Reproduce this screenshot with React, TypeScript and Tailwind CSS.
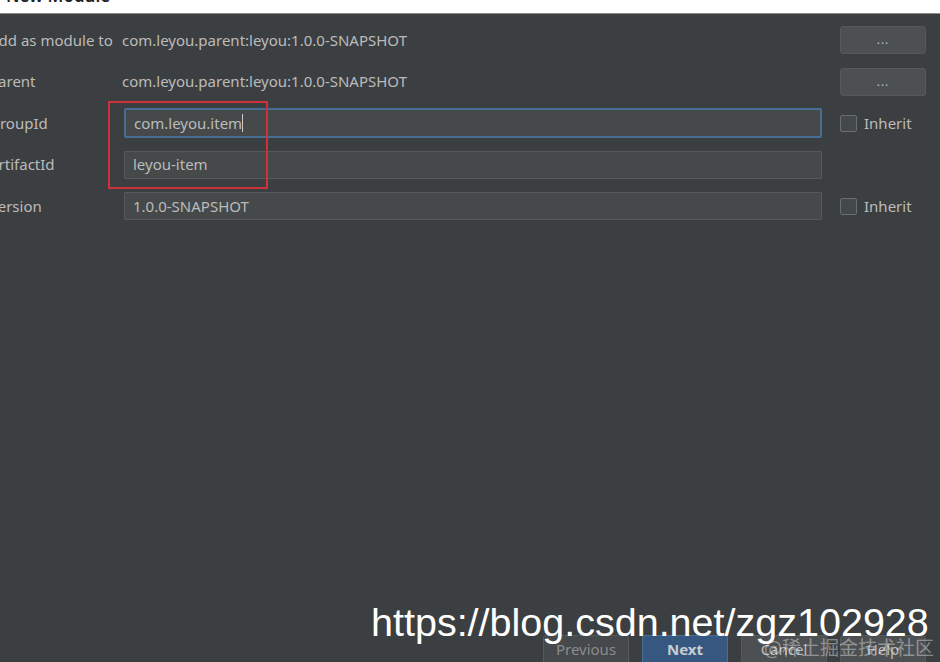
import React from "react";

const font = { fontFamily: '"Noto Sans", "Open Sans", sans-serif' };

function Checkbox({ label }: { label: string }) {
  return (
    <label className="flex items-center gap-[7px] text-[15px] text-[#bbbbbb]">
      <span className="w-[17px] h-[17px] rounded-[2px] border border-[#6b6e70] bg-[#43484a]" />
      {label}
    </label>
  );
}

function DotsButton() {
  return (
    <button className="w-[86px] h-[28px] rounded-[3px] border border-[#55595b] bg-[#4c5052] text-[#bbbbbb] text-[12px] leading-none tracking-[1px]">
      ...
    </button>
  );
}

function Input({ value, focused }: { value: string; focused?: boolean }) {
  return (
    <div
      className={
        focused
          ? "flex-1 h-[30px] flex items-center px-[8px] bg-[#45494a] border-2 border-[#466d94] rounded-[2px] text-[15px] text-[#bbbbbb]"
          : "flex-1 h-[28px] flex items-center px-[8px] bg-[#45494a] border border-[#55595b] rounded-[1px] text-[15px] text-[#bbbbbb]"
      }
    >
      {value}
      {focused && <span className="w-px h-[18px] bg-[#cccccc]" />}
    </div>
  );
}

export default function App() {
  const rows = [
    { label: "Add as module to", kind: "text", value: "com.leyou.parent:leyou:1.0.0-SNAPSHOT" },
    { label: "Parent", kind: "text", value: "com.leyou.parent:leyou:1.0.0-SNAPSHOT" },
    { label: "GroupId", kind: "focus", value: "com.leyou.item" },
    { label: "ArtifactId", kind: "input", value: "leyou-item" },
    { label: "Version", kind: "inherit", value: "1.0.0-SNAPSHOT" },
  ];

  return (
    <div className="relative w-[940px] h-[662px] overflow-hidden bg-[#3c3f41] flex flex-col" style={font}>
      {/* title bar, mostly cropped */}
      <div className="h-[14px] bg-white border-b border-[#8c8c8c] overflow-hidden flex justify-between px-[6px] shrink-0">
        <span className="mt-[-17px] text-[17px] font-semibold text-[#222]">New Module</span>
        <span className="mt-[-18px] text-[18px] text-[#444] mr-[8px]">×</span>
      </div>

      <div className="flex flex-col gap-[13.5px] pt-[12px] ml-[-11px] pr-[14px]">
        {rows.map((r) => (
          <div key={r.label} className="flex items-center h-[28px]">
            <span className="w-[133px] shrink-0 text-[15px] text-[#bbbbbb]">{r.label}</span>
            {r.kind === "text" ? (
              <>
                <span className="flex-1 text-[15px] text-[#bbbbbb]">{r.value}</span>
                <DotsButton />
              </>
            ) : (
              <>
                <div className="flex-1 flex ml-[2px]">
                  <Input value={r.value} focused={r.kind === "focus"} />
                </div>
                <div className="w-[104px] pl-[18px] shrink-0">
                  {r.kind !== "input" && <Checkbox label="Inherit" />}
                </div>
              </>
            )}
          </div>
        ))}
      </div>

      <div className="flex-1" />

      <div className="flex justify-end gap-[13px] pr-[14px] h-[29px] shrink-0 mb-[-2px]">
        <button className="w-[86px] rounded-t-[3px] border border-[#55595b] bg-[#45494b] text-[15px] text-[#8a8c8e]">
          Previous
        </button>
        <button className="w-[86px] rounded-t-[3px] border border-[#4a6f96] bg-[#365880] text-[15px] font-bold text-[#c8ccd0]">
          Next
        </button>
        <button className="w-[86px] rounded-t-[3px] border border-[#55595b] bg-[#4c5052] text-[15px] text-[#bbbbbb]">
          Cancel
        </button>
        <button className="w-[86px] rounded-t-[3px] border border-[#55595b] bg-[#4c5052] text-[15px] text-[#bbbbbb]">
          Help
        </button>
      </div>

      {/* highlight box */}
      <div className="absolute left-[108px] top-[101px] w-[160px] h-[88px] border-2 border-[#d0303a]" />

      {/* watermarks */}
      <div
        className="absolute left-[764px] top-[633px] text-[19px] text-white/40 whitespace-nowrap"
        style={{ fontFamily: '"Noto Sans CJK SC", sans-serif' }}
      >
        @稀土掘金技术社区
      </div>
      <div
        className="absolute left-[371px] top-[603px] text-[39.5px] leading-none text-white whitespace-nowrap"
        style={{ fontFamily: '"Liberation Sans", Arial, sans-serif' }}
      >
        https://blog.csdn.net/zgz102928
      </div>
    </div>
  );
}
